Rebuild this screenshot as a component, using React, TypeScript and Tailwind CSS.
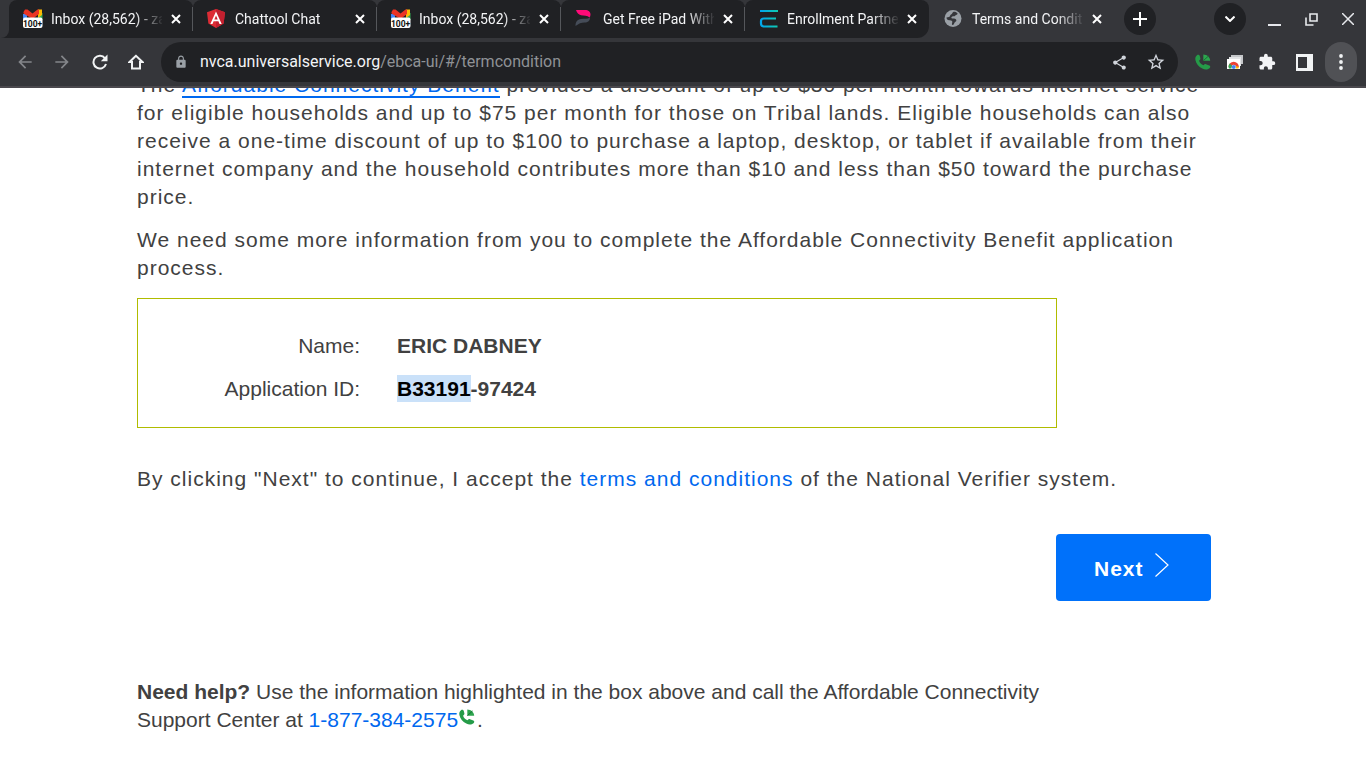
import React from 'react';
import { MdArrowBack, MdArrowForward, MdLock, MdShare, MdStarBorder, MdExtension } from 'react-icons/md';

function GmailIcon() {
  return (
    <svg viewBox="0 0 20 20" className="h-5 w-5">
      <path d="M0 5v6h4V5z" fill="#4285f4" />
      <path d="M15 4v7h4.500V4z" fill="#34a853" />
      <path d="M15 .500h4V6l-4 3z" fill="#fbbc04" />
      <path d="M.500 3L2 .500h2.500l5 4 5-4h1.500V5l-6.500 5L.500 4.500z" fill="#ea3323" />
      <rect y="8.500" width="19.500" height="10.500" rx="2" fill="#fff" />
      <text x="9.500" y="17.500" textAnchor="middle" fontSize="8.500" fontWeight="700" fontFamily="Roboto, sans-serif" fill="#111">
        100+
      </text>
    </svg>
  );
}

function AngularIcon() {
  return (
    <svg viewBox="0 0 20 20" className="h-5 w-5">
      <path d="M9 0l9 3.300-1.400 11.200L9 19l-7.600-4.500L0 3.300z" fill="#dd2c35" />
      <path d="M9 0l9 3.300-1.400 11.200L9 19z" fill="#c3202f" />
      <path d="M9 2.500L3.300 15h2.200l1.100-2.800h4.800l1.100 2.800h2.200zm0 4l1.700 4H7.300z" fill="#fff" />
    </svg>
  );
}

function RibbonIcon() {
  return (
    <svg viewBox="0 0 20 20" className="h-5 w-5">
      <path d="M1 1h9c3.500 0 5.500 2 5.500 4.500 0 1.200-.4 2.200-1 3C12.500 6.500 9 6.800 6 6.300 3.500 5.500 2 4 1 1z" fill="#ff0a78" />
      <path d="M15 8.500c0 3.500-2 5-5.500 5C6 13.500 4 14.500.500 17c0-4.500 2-6.500 5.500-7 3.500-.4 6 .3 9-1.500z" fill="#454c58" />
    </svg>
  );
}

function EnrollIcon() {
  return (
    <svg viewBox="0 0 20 20" className="h-5 w-5" fill="none" strokeWidth="2.200">
      <defs>
        <linearGradient id="enroll" gradientUnits="userSpaceOnUse" x1="0" y1="10" x2="19" y2="10">
          <stop stopColor="#00a2f2" />
          <stop offset="1" stopColor="#0fcbb0" />
        </linearGradient>
      </defs>
      <path d="M1 2h18M17 9.500H5Q2 9.500 2 12v2.500q0 3 3 3h13.500" stroke="url(#enroll)" />
    </svg>
  );
}

function GlobeIcon() {
  return (
    <svg viewBox="0 0 20 20" className="h-5 w-5">
      <circle cx="9" cy="9.500" r="8.500" fill="#9aa0a6" />
      <path d="M9.500 2.700C8 3.500 8.500 5 7 5.400c-1.200.4-.5 2-2 2.500L2.500 8.500c.1 2 1.200 2.700 2.500 2.700 1.300 0 2.700 0 3.200 1 .4 1.200-.6 2.300-.2 3.600 1.200.3 2-.3 2.200-1.500.3-1.300 2.200-1.400 2.200-3 0-1.700-2-1.800-4-1.900-1.300-.2-1.500-1.700 0-2 1.500-.2 2 .3 2.800-.8.6-.9 2.500-.8 2.400-2.200-1-1.200-2.400-1.900-4.100-1.700z" fill="#35363a" />
    </svg>
  );
}

function CloseIcon() {
  return (
    <svg viewBox="0 0 10 10" className="h-2.5 w-2.5" stroke="#fff" strokeWidth="2">
      <path d="M1 1l8 8M9 1l-8 8" />
    </svg>
  );
}

function ReloadIcon() {
  return (
    <svg viewBox="0 0 16 16" className="h-4 w-4">
      <path d="M13 4.300A6.400 6.400 0 1014 10" fill="none" stroke="#f1f3f4" strokeWidth="2" />
      <path d="M15.500.500v6.700H8.800z" fill="#f1f3f4" />
    </svg>
  );
}

function HomeIcon() {
  return (
    <svg viewBox="0 0 16 16" className="h-4 w-4">
      <path d="M8 1.800L1.500 8H4v6.500h8V8h2.500z" fill="none" stroke="#f1f3f4" strokeWidth="2" />
    </svg>
  );
}

function PhoneIcon({ className }: { className?: string }) {
  return (
    <svg viewBox="0 0 16 16" className={className}>
      <path d="M2 1.200C3 .300 4.400.800 4.800 2l.6 2.500c.2 1-.8 1.800-1.300 2.300.6 2 2.200 3.600 4.500 4.500.6-.8 1.400-1.400 2.400-1.100l3.300 1.200c1.300.6 1.200 2 .2 2.800-2 1.700-4.700 1.600-7.200.4C3.700 12.800 1 9.500.4 6 .1 4 .500 2.300 2 1.200z" fill="#259b48" />
      <path d="M8.300.500v6.200h6.900C15 3.300 12 .500 8.300.500z" fill="#2da44e" />
      <path d="M8.500 6.500L13.500 2" stroke="#137333" strokeWidth="1" />
    </svg>
  );
}

function CaptureIcon() {
  return (
    <svg viewBox="0 0 18 16" className="h-4 w-[18px]">
      <path d="M5 1h12v9H5z" fill="#c5c7ca" />
      <path d="M3 3h12v9H3z" fill="#e3e4e6" />
      <path d="M1 5h13v10H1z" fill="#fff" />
      <path d="M2.500 13a5.200 5.200 0 0110.400 0h-3a2.200 2.200 0 00-4.400 0z" fill="#ea4335" />
      <path d="M2.500 13c0-1.500.5-2.600 1.300-3.500l2.100 2.300-.4 2.700H3z" fill="#34a853" />
      <path d="M12.900 13l-.5 1.500H9.700L10 12z" fill="#fbbc04" />
      <circle cx="7.700" cy="13" r="2" fill="#4285f4" />
    </svg>
  );
}

const tabs = [
  { title: 'Inbox (28,562) - za', icon: GmailIcon },
  { title: 'Chattool Chat', icon: AngularIcon },
  { title: 'Inbox (28,562) - za', icon: GmailIcon },
  { title: 'Get Free iPad With', icon: RibbonIcon },
  { title: 'Enrollment Partne', icon: EnrollIcon },
];

function Tab({ title, icon: Icon, className }: { title: string; icon: React.ComponentType; className?: string }) {
  return (
    <div className={`flex h-[38px] w-46 shrink-0 items-center pb-px pl-3.5 ${className}`}>
      <Icon />
      <span className="ml-2 w-[111px] overflow-hidden whitespace-nowrap text-sm text-gray-100 [mask-image:linear-gradient(to_right,#000_84px,transparent_113px)]">
        {title}
      </span>
      <button aria-label="Close tab" className="ml-[9px]">
        <CloseIcon />
      </button>
    </div>
  );
}

function TabStrip() {
  return (
    <div className="flex h-[38px] items-center bg-[#35363a]">
      <div className="flex h-full rounded-br-xl bg-[#202124]">
        <div className="w-[9px] rounded-br-lg bg-[#35363a]" />
        {tabs.map((tab, i) => (
          <div key={i} className="flex items-center bg-[#35363a]">
            <Tab
              title={tab.title}
              icon={tab.icon}
              className={i === tabs.length - 1 ? 'rounded-t-lg rounded-br-xl bg-[#202124]' : 'rounded-t-lg bg-[#202124]'}
            />
            {i < tabs.length - 1 && <div className="-ml-px h-6 w-px bg-[#55575b]" />}
          </div>
        ))}
      </div>
      <Tab title="Terms and Conditi" icon={GlobeIcon} className="ml-px" />
      <button aria-label="New tab" className="ml-2.5 flex h-8 w-8 items-center justify-center rounded-full bg-[#202124]">
        <svg viewBox="0 0 14 14" className="h-3.5 w-3.5" stroke="#fff" strokeWidth="2">
          <path d="M7 0v14M0 7h14" />
        </svg>
      </button>
      <div className="ml-auto flex items-center pr-3">
        <button aria-label="Search tabs" className="flex h-8 w-8 items-center justify-center rounded-full bg-[#202124]">
          <svg viewBox="0 0 10 6" className="h-1.5 w-2.5" fill="none" stroke="#fff" strokeWidth="2">
            <path d="M.5.500L5 5 9.500.500" />
          </svg>
        </button>
        <button aria-label="Minimize" className="ml-[22px] mt-3 h-0.5 w-[13px] bg-gray-200" />
        <button aria-label="Restore" className="ml-6">
          <svg viewBox="0 0 13 13" className="h-[13px] w-[13px]" fill="none" stroke="#e8eaed" strokeWidth="1.600">
            <path d="M5 1h7v7H5zM1 4.500V12h7.500" />
          </svg>
        </button>
        <button aria-label="Close window" className="ml-6">
          <svg viewBox="0 0 12 12" className="h-3 w-3" stroke="#e8eaed" strokeWidth="1.500">
            <path d="M0 0l12 12M12 0L0 12" />
          </svg>
        </button>
      </div>
    </div>
  );
}

function Toolbar() {
  return (
    <div className="flex h-[50px] items-center border-b-2 border-[#4a484d] bg-[#35363a] pl-[15px] pr-[9px] text-gray-100">
      <button aria-label="Back" className="text-[#84868a]">
        <MdArrowBack className="h-5 w-5" />
      </button>
      <button aria-label="Forward" className="ml-[17px] text-[#84868a]">
        <MdArrowForward className="h-5 w-5" />
      </button>
      <button aria-label="Reload" className="ml-5">
        <ReloadIcon />
      </button>
      <button aria-label="Home" className="ml-5">
        <HomeIcon />
      </button>
      <div className="ml-[17px] flex h-10 flex-1 items-center rounded-full bg-[#202124] pl-[13px] pr-3">
        <MdLock className="h-3.5 w-3.5 text-[#9aa0a6]" />
        <a href="#/termcondition" className="ml-3 text-base text-[#8f9296]">
          <span className="text-gray-100">nvca.universalservice.org</span>/ebca-ui/#/termcondition
        </a>
        <button aria-label="Share" className="ml-auto text-gray-300">
          <MdShare className="h-[17px] w-[17px]" />
        </button>
        <button aria-label="Bookmark" className="ml-[18px] text-gray-300">
          <MdStarBorder className="h-5 w-5" />
        </button>
      </div>
      <button aria-label="Call extension" className="ml-[17px]">
        <PhoneIcon className="h-4 w-4" />
      </button>
      <button aria-label="Capture" className="ml-[15px]">
        <CaptureIcon />
      </button>
      <button aria-label="Extensions" className="ml-3.5">
        <MdExtension className="h-[18px] w-[18px]" />
      </button>
      <button aria-label="Side panel" className="ml-5">
        <svg viewBox="0 0 17 17" className="h-[17px] w-[17px]">
          <path d="M0 0h17v17H0zM2 3v11h9V3z" fill="#f1f3f4" fillRule="evenodd" />
        </svg>
      </button>
      <button aria-label="Menu" className="ml-3 flex h-10 w-8 items-center justify-center rounded-full bg-[#505155]">
        <svg viewBox="0 0 4 16" className="h-4 w-1" fill="#f1f3f4">
          <circle cx="2" cy="2" r="1.900" />
          <circle cx="2" cy="8" r="1.900" />
          <circle cx="2" cy="14" r="1.900" />
        </svg>
      </button>
    </div>
  );
}

export default function App() {
  return (
    <div className="flex h-screen flex-col overflow-hidden bg-white">
      <header className="shrink-0 font-[Roboto,sans-serif]">
        <TabStrip />
        <Toolbar />
      </header>

      <main className="min-h-0 flex-1 overflow-hidden pl-[137px] pr-[155px] font-['Liberation_Sans',Arial,sans-serif] text-[21px] leading-7 text-[#414141]">
        <div className="-mt-[17px] tracking-[1px]">
          <p>
            The{' '}
            <a href="#benefit" className="border-b-2 border-[#0068ef] text-[#0068ef]">
              Affordable Connectivity Benefit
            </a>{' '}
            provides a discount of up to $30 per month towards internet service for eligible households and up to $75 per
            month for those on Tribal lands. Eligible households can also receive a one-time discount of up to $100 to
            purchase a laptop, desktop, or tablet if available from their internet company and the household contributes
            more than $10 and less than $50 toward the purchase price.
          </p>
          <p className="mt-[15px]">
            We need some more information from you to complete the Affordable Connectivity Benefit application process.
          </p>
        </div>

        <dl className="mt-4 grid max-w-[920px] grid-cols-[222px_1fr] gap-x-[37px] gap-y-[15px] border border-[#b0bc00] pb-6 pt-[33px]">
          <dt className="text-right">Name:</dt>
          <dd className="font-bold">ERIC DABNEY</dd>
          <dt className="text-right">Application ID:</dt>
          <dd className="font-bold">
            <span className="bg-[#cae1f9] py-0.5 text-black">B33191</span>-97424
          </dd>
        </dl>

        <p className="mt-[37px] tracking-[1px]">
          By clicking "Next" to continue, I accept the{' '}
          <a href="#terms" className="text-[#0068ef]">
            terms and conditions
          </a>{' '}
          of the National Verifier system.
        </p>

        <div className="mt-[41px] flex justify-end">
          <button className="flex h-[67px] w-[155px] items-center gap-[11px] rounded bg-[#0071fa] pl-[38px] font-bold tracking-[1px] text-white">
            <span className="pt-0.5">Next</span>
            <svg viewBox="0 0 14 24" className="mb-1.5 h-6 w-3.5" fill="none" stroke="#fff" strokeWidth="1.200">
              <path d="M.5.500L13 12 .500 23.500" />
            </svg>
          </button>
        </div>

        <p className="mt-[77px] max-w-[920px]">
          <b>Need help?</b> Use the information highlighted in the box above and call the Affordable Connectivity Support
          Center at{' '}
          <a href="tel:18773842575" className="text-[#0068ef]">
            1-877-384-2575
            <PhoneIcon className="mb-2 ml-px mr-0.5 inline-block h-4 w-4" />
          </a>
          .
        </p>
      </main>
    </div>
  );
}
